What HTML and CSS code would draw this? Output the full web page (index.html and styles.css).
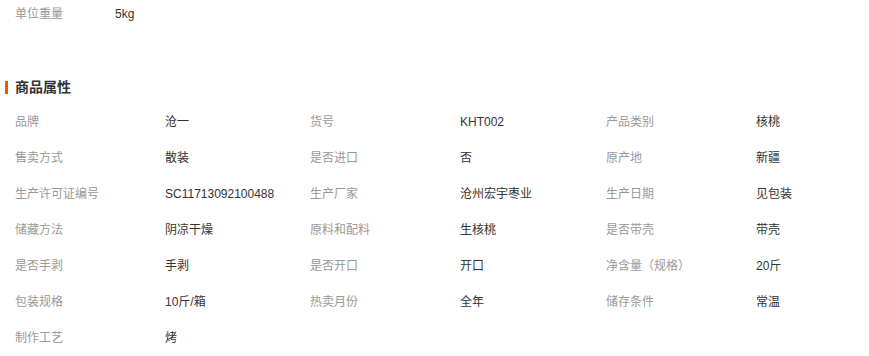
FILE: index.html
```html
<!DOCTYPE html>
<html lang="zh-CN">
<head>
<meta charset="utf-8">
<link rel="stylesheet" href="styles.css">
</head>
<body>
<div class="page">
  <div class="weight-row">
    <span class="weight-label">单位重量</span>
    <span class="weight-value">5kg</span>
  </div>
  <h3 class="section-title">商品属性</h3>
  <ul class="attrs">
    <li><span class="k">品牌</span><span class="v">沧一</span></li>
    <li><span class="k">货号</span><span class="v">KHT002</span></li>
    <li><span class="k">产品类别</span><span class="v">核桃</span></li>
    <li><span class="k">售卖方式</span><span class="v">散装</span></li>
    <li><span class="k">是否进口</span><span class="v">否</span></li>
    <li><span class="k">原产地</span><span class="v">新疆</span></li>
    <li><span class="k">生产许可证编号</span><span class="v">SC11713092100488</span></li>
    <li><span class="k">生产厂家</span><span class="v">沧州宏宇枣业</span></li>
    <li><span class="k">生产日期</span><span class="v">见包装</span></li>
    <li><span class="k">储藏方法</span><span class="v">阴凉干燥</span></li>
    <li><span class="k">原料和配料</span><span class="v">生核桃</span></li>
    <li><span class="k">是否带壳</span><span class="v">带壳</span></li>
    <li><span class="k">是否手剥</span><span class="v">手剥</span></li>
    <li><span class="k">是否开口</span><span class="v">开口</span></li>
    <li><span class="k">净含量（规格）</span><span class="v">20斤</span></li>
    <li><span class="k">包装规格</span><span class="v">10斤/箱</span></li>
    <li><span class="k">热卖月份</span><span class="v">全年</span></li>
    <li><span class="k">储存条件</span><span class="v">常温</span></li>
    <li><span class="k">制作工艺</span><span class="v">烤</span></li>
  </ul>
</div>
</body>
</html>
```
FILE: styles.css
```css
* { box-sizing: border-box; }
html, body { margin: 0; padding: 0; background: #fff; }
body {
  font-family: "Liberation Sans", "Noto Sans CJK SC", sans-serif;
  font-size: 12px;
  color: #333;
}
.page { padding: 4px 0 0 0; }
.weight-row {
  display: flex;
  padding-left: 15px;
  line-height: 20px;
}
.weight-label { width: 100px; color: #999; }
.weight-value { color: #333; }
.section-title {
  margin: 53px 0 7px 0;
  padding-left: 15px;
  position: relative;
  font-size: 14px;
  font-weight: bold;
  line-height: 20px;
  color: #333;
}
.section-title::before {
  content: "";
  position: absolute;
  left: 5px;
  top: 4px;
  width: 3px;
  height: 13px;
  background: #ff5000;
}
.attrs {
  list-style: none;
  margin: 0;
  padding: 0 0 0 15px;
  display: grid;
  grid-template-columns: 295px 296px 1fr;
}
.attrs li {
  display: flex;
  line-height: 36px;
  height: 36px;
}
.attrs .k { width: 150px; color: #999; flex: none; }
.attrs .v { color: #333; }
```
